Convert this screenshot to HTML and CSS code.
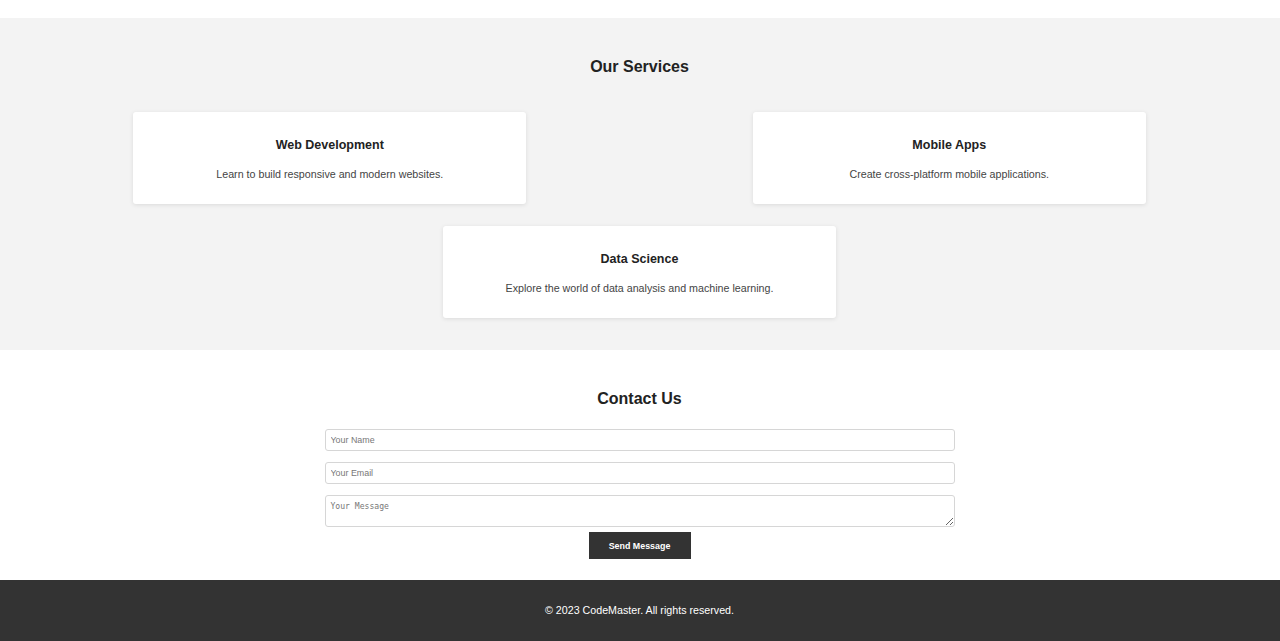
FILE: index.html
```html
<!DOCTYPE html>
<html lang="en">
<head>
  <meta charset="UTF-8">
  <title>CodeMaster</title>
  <link rel="stylesheet" href="styles.css">
</head>
<body>

<div class="top-strip"></div>

<section id="services">
  <h2>Our Services</h2>
  <div class="service-list">
    <div class="card">
      <h3>Web Development</h3>
      <p>Learn to build responsive and modern websites.</p>
    </div>
    <div class="card">
      <h3>Mobile Apps</h3>
      <p>Create cross-platform mobile applications.</p>
    </div>
    <div class="card">
      <h3>Data Science</h3>
      <p>Explore the world of data analysis and machine learning.</p>
    </div>
  </div>
</section>

<section id="contact">
  <h2>Contact Us</h2>
  <form class="contact-form">
    <input type="text" placeholder="Your Name">
    <input type="email" placeholder="Your Email">
    <textarea placeholder="Your Message"></textarea>
    <button type="button">Send Message</button>
  </form>
</section>

<footer>
  &copy; 2023 CodeMaster. All rights reserved.
</footer>

</body>
</html>
```

FILE: styles.css
```css
body {
  font-family: "Liberation Sans", Arial, sans-serif;
  background-color: #fff;
  color: #333;
  margin: 0;
  padding: 0;
  font-size: 10.7px;
}
.top-strip {
  height: 18px;
  background: #fff;
}
section {
  padding: 27px 21px 32px 20px;
  text-align: center;
}
section h2 {
  font-size: 16px;
  line-height: 18px;
  margin: 13px 0;
  color: #222;
}
#services {
  background-color: #f3f3f3;
}
.service-list {
  display: flex;
  flex-wrap: wrap;
  justify-content: space-around;
  row-gap: 22px;
  padding-top: 23px;
}
.card {
  width: 393px;
  box-sizing: border-box;
  margin: 0 20px;
  background: white;
  border-radius: 3px;
  padding: 13px;
  box-shadow: 0 1px 4px rgba(0,0,0,0.1);
}
.card h3 {
  font-size: 12.5px;
  line-height: 15px;
  margin: 12.5px 0 13px;
  color: #222;
}
.card p {
  font-size: 10.7px;
  line-height: 17px;
  margin: 0 0 8.5px;
  color: #444;
}
#contact {
  background: #fff;
  padding-bottom: 21px;
}
.contact-form {
  width: 630px;
  margin: 21px auto 0;
}
.contact-form input,
.contact-form textarea {
  display: block;
  width: 100%;
  box-sizing: border-box;
  border: 1px solid #d6d6d6;
  border-radius: 3px;
  padding: 0 5px;
  font-family: "Liberation Sans", Arial, sans-serif;
  font-size: 8.9px;
  color: #333;
  background: #fff;
}
.contact-form input {
  height: 22px;
  margin-bottom: 11px;
}
.contact-form textarea {
  height: 32px;
  padding-top: 5px;
  margin-bottom: 5px;
  font-family: "DejaVu Sans Mono", monospace;
  font-size: 8.1px;
}
.contact-form ::placeholder {
  color: #777;
}
.contact-form button {
  display: block;
  margin: 0 auto;
  width: 102px;
  height: 27px;
  background-color: #333;
  color: white;
  border: none;
  border-radius: 0;
  font-family: "Liberation Sans", Arial, sans-serif;
  font-size: 8.9px;
  font-weight: bold;
  cursor: pointer;
}
footer {
  background-color: #333;
  color: #fff;
  text-align: center;
  padding: 22px 21px 22px 20px;
  line-height: 17px;
}
```
